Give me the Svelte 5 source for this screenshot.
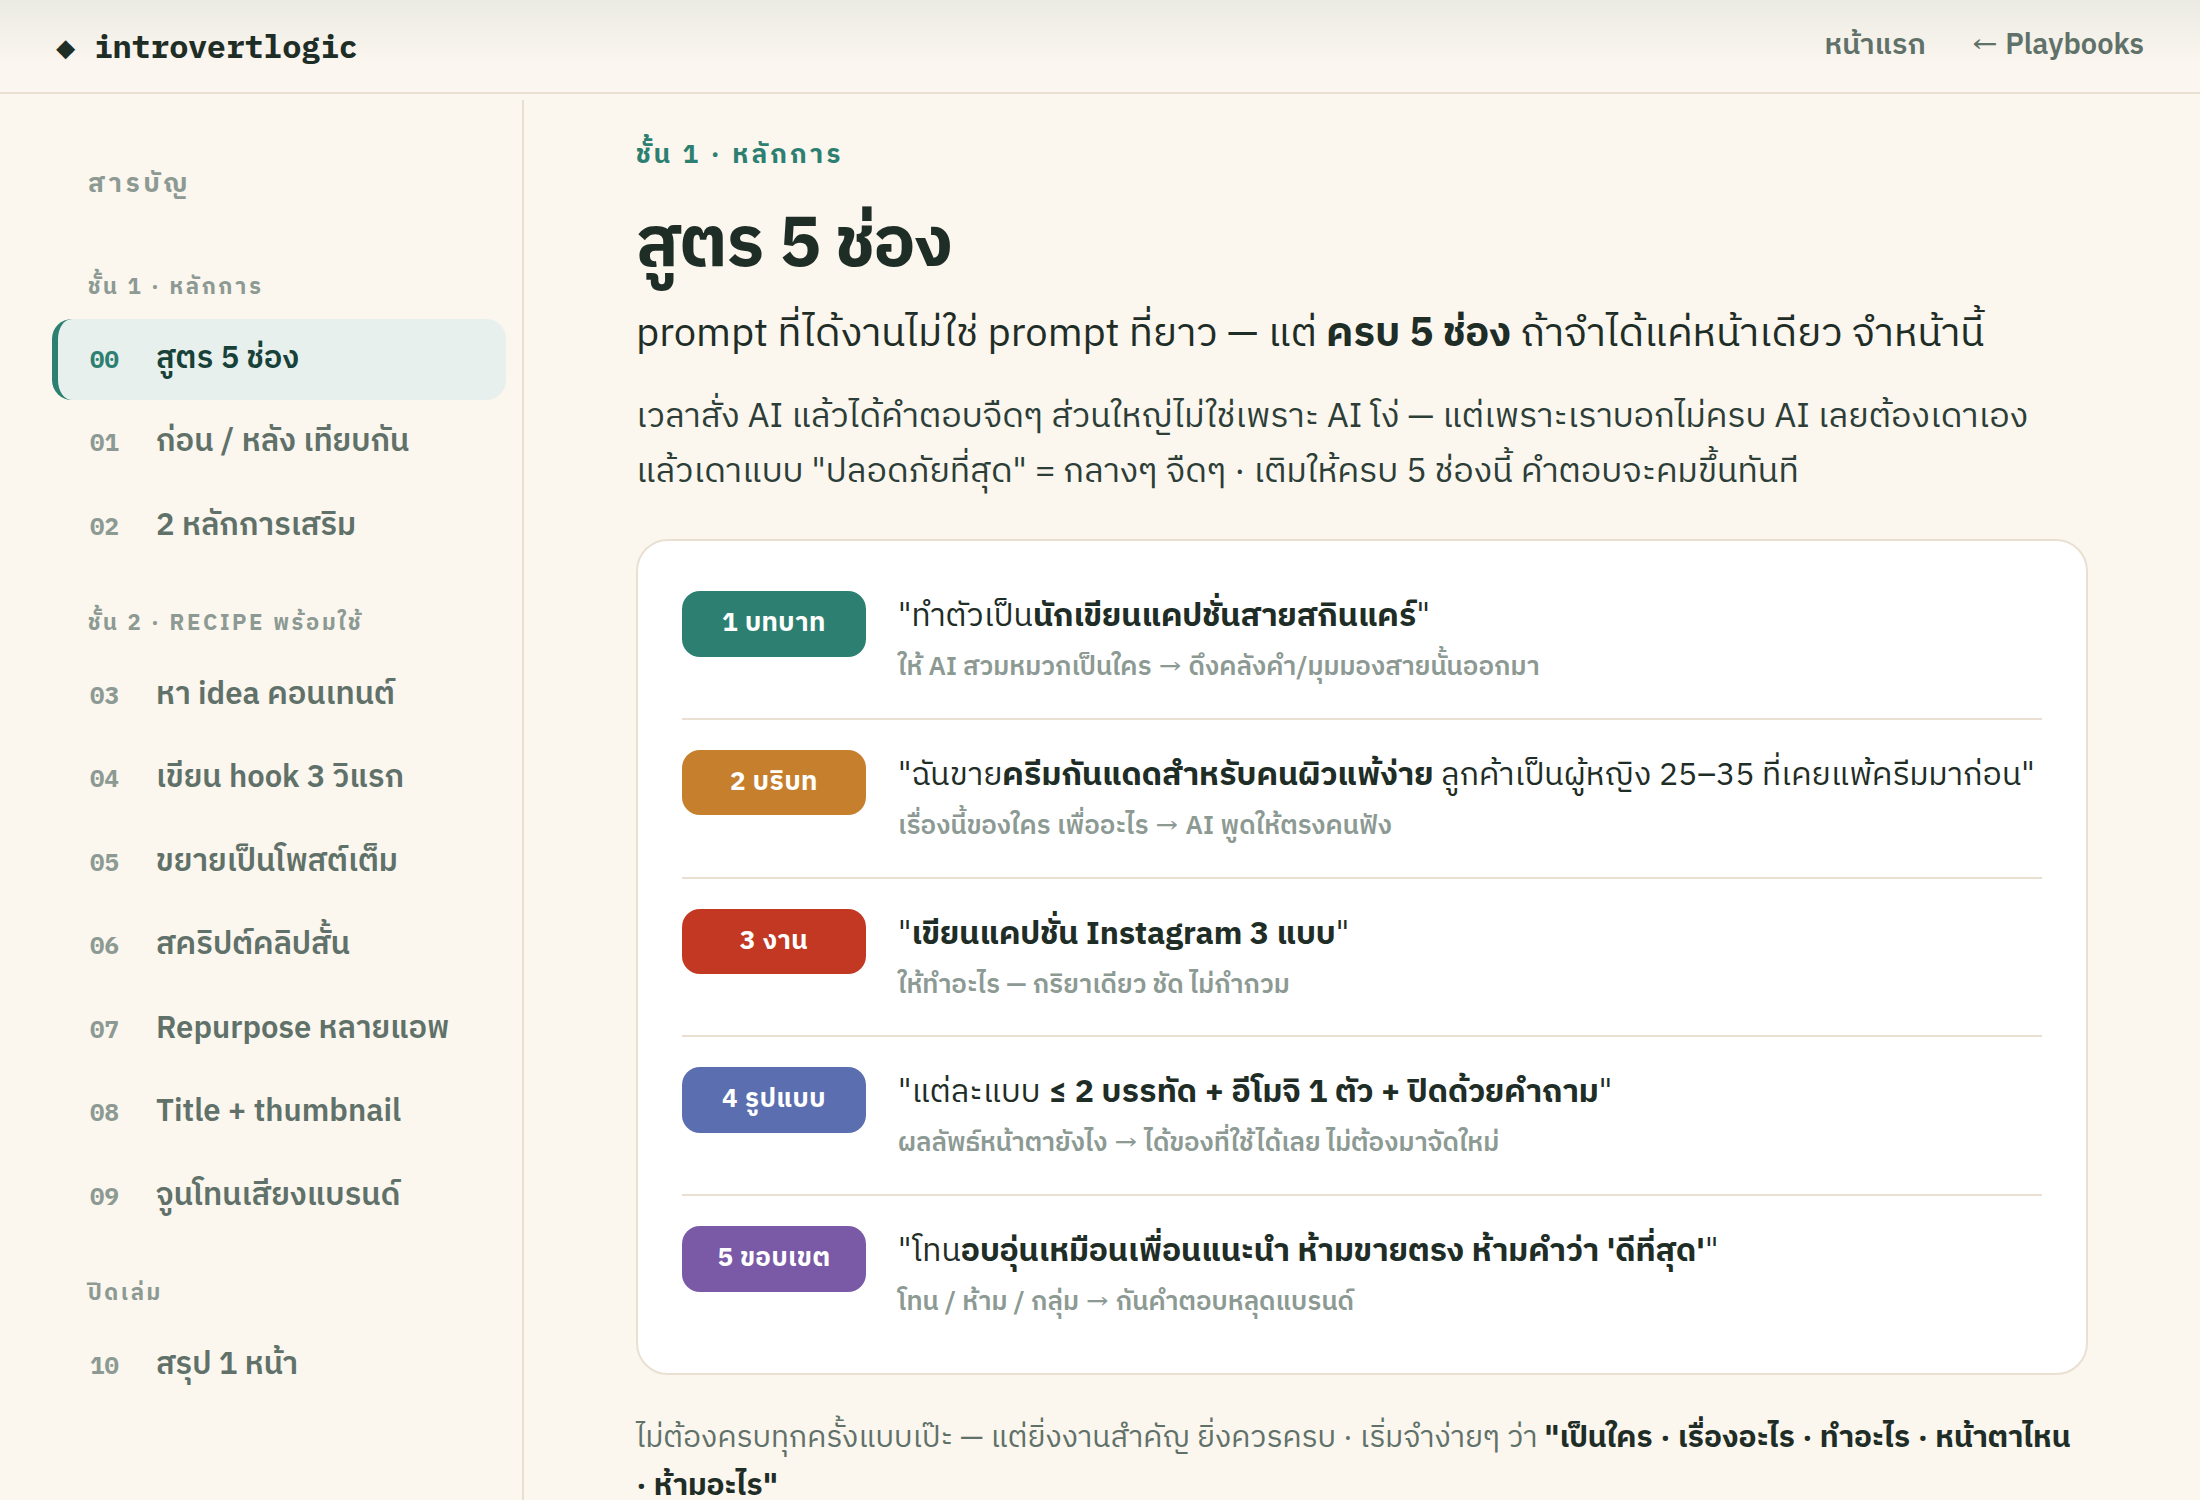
<script>
  const groups = [
    {
      title: "ชั้น 1 · หลักการ",
      items: [
        { num: "00", label: "สูตร 5 ช่อง", active: true },
        { num: "01", label: "ก่อน / หลัง เทียบกัน" },
        { num: "02", label: "2 หลักการเสริม" },
      ],
    },
    {
      title: "ชั้น 2 · RECIPE พร้อมใช้",
      items: [
        { num: "03", label: "หา idea คอนเทนต์" },
        { num: "04", label: "เขียน hook 3 วิแรก" },
        { num: "05", label: "ขยายเป็นโพสต์เต็ม" },
        { num: "06", label: "สคริปต์คลิปสั้น" },
        { num: "07", label: "Repurpose หลายแอพ" },
        { num: "08", label: "Title + thumbnail" },
        { num: "09", label: "จูนโทนเสียงแบรนด์" },
      ],
    },
    {
      title: "ปิดเล่ม",
      items: [{ num: "10", label: "สรุป 1 หน้า" }],
    },
  ]

  const slots = [
    {
      badge: "1 บทบาท",
      tone: "green",
      before: '"ทำตัวเป็น',
      strong: "นักเขียนแคปชั่นสายสกินแคร์",
      after: '"',
      note: ["ให้ AI สวมหมวกเป็นใคร", "ดึงคลังคำ/มุมมองสายนั้นออกมา"],
    },
    {
      badge: "2 บริบท",
      tone: "amber",
      before: '"ฉันขาย',
      strong: "ครีมกันแดดสำหรับคนผิวแพ้ง่าย",
      after: ' ลูกค้าเป็นผู้หญิง 25–35 ที่เคยแพ้ครีมมาก่อน"',
      note: ["เรื่องนี้ของใคร เพื่ออะไร", "AI พูดให้ตรงคนฟัง"],
    },
    {
      badge: "3 งาน",
      tone: "red",
      before: '"',
      strong: "เขียนแคปชั่น Instagram 3 แบบ",
      after: '"',
      note: ["ให้ทำอะไร — กริยาเดียว ชัด ไม่กำกวม"],
    },
    {
      badge: "4 รูปแบบ",
      tone: "blue",
      before: '"แต่ละแบบ ',
      strong: "≤ 2 บรรทัด + อีโมจิ 1 ตัว + ปิดด้วยคำถาม",
      after: '"',
      note: ["ผลลัพธ์หน้าตายังไง", "ได้ของที่ใช้ได้เลย ไม่ต้องมาจัดใหม่"],
    },
    {
      badge: "5 ขอบเขต",
      tone: "purple",
      before: '"โทน',
      strong: "อบอุ่นเหมือนเพื่อนแนะนำ ห้ามขายตรง ห้ามคำว่า 'ดีที่สุด'",
      after: '"',
      note: ["โทน / ห้าม / กลุ่ม", "กันคำตอบหลุดแบรนด์"],
    },
  ]
</script>

<div class="page" lang="th">
  <header class="topbar">
    <a class="brand" href="#home">◆ introvertlogic</a>
    <nav class="links">
      <a href="#home">หน้าแรก</a>
      <a href="#playbooks"><span class="arrow">←</span> Playbooks</a>
    </nav>
  </header>

  <div class="layout">
    <aside class="sidebar">
      <div class="toc-title">สารบัญ</div>
      {#each groups as group (group.title)}
        <div class="group">
          <div class="group-title">{group.title}</div>
          {#each group.items as item (item.num)}
            <a class="item" class:active={item.active} href="#s{item.num}">
              <span class="num">{item.num}</span>
              <span class="label">{item.label}</span>
            </a>
          {/each}
        </div>
      {/each}
    </aside>

    <main class="content">
      <div class="eyebrow">ชั้น 1 · หลักการ</div>
      <h1>สูตร 5 ช่อง</h1>
      <p class="lead">
        prompt ที่ได้งานไม่ใช่ prompt ที่ยาว — แต่ <strong>ครบ 5 ช่อง</strong> ถ้าจำได้แค่หน้าเดียว จำหน้านี้
      </p>
      <p class="body">
        เวลาสั่ง AI แล้วได้คำตอบจืดๆ ส่วนใหญ่ไม่ใช่เพราะ AI โง่ — แต่เพราะเราบอกไม่ครบ AI เลยต้องเดาเอง<br />
        แล้วเดาแบบ "ปลอดภัยที่สุด" = กลางๆ จืดๆ · เติมให้ครบ 5 ช่องนี้ คำตอบจะคมขึ้นทันที
      </p>

      <section class="card">
        {#each slots as slot (slot.badge)}
          <div class="slot">
            <span class="badge {slot.tone}">{slot.badge}</span>
            <div class="slot-text">
              <div class="quote">{slot.before}<strong>{slot.strong}</strong>{slot.after}</div>
              <div class="note">
                {slot.note[0]}
                {#if slot.note[1]}<span class="arrow">→</span> {slot.note[1]}{/if}
              </div>
            </div>
          </div>
        {/each}
      </section>

      <p class="closing">
        ไม่ต้องครบทุกครั้งแบบเป๊ะ — แต่ยิ่งงานสำคัญ ยิ่งควรครบ · เริ่มจำง่ายๆ ว่า
        <strong>"เป็นใคร · เรื่องอะไร · ทำอะไร · หน้าตาไหน<br />· ห้ามอะไร"</strong>
      </p>
    </main>
  </div>
</div>

<style>
  :global(body) {
    margin: 0;
    background: #fbf6ee;
  }

  .page {
    --ink: #1f2d27;
    --ink-soft: #5f7169;
    --muted: #8c9a93;
    --line: #e9e0d2;
    --green: #2d8071;
    height: 1500px;
    overflow: hidden;
    display: flex;
    flex-direction: column;
    background: #fbf6ee;
    color: var(--ink);
    font-family: "IBM Plex Sans Thai", "IBM Plex Sans", "Noto Sans", sans-serif;
    white-space: nowrap;
  }

  a {
    color: inherit;
    text-decoration: none;
  }

  strong {
    font-weight: 700;
  }

  .topbar {
    box-sizing: border-box;
    height: 94px;
    flex: none;
    display: flex;
    align-items: flex-start;
    justify-content: space-between;
    padding: 0 56px;
    border-bottom: 2px solid var(--line);
    background: linear-gradient(#ebebe3, #fbf6ef 64px);
  }

  .brand {
    font: 700 32px/92px "IBM Plex Mono", "Liberation Mono", monospace;
    letter-spacing: -0.35px;
  }

  .links {
    display: flex;
    gap: 45px;
    color: var(--ink-soft);
    font-size: 29px;
    font-weight: 600;
    line-height: 91px;
  }

  .arrow {
    display: inline-flex;
    justify-content: center;
    width: 0.74em;
    font-family: "Sarabun", "Liberation Sans", sans-serif;
    font-size: 1.28em;
    font-weight: 700;
    line-height: 0;
  }

  .layout {
    flex: 1;
    min-height: 0;
    display: flex;
    padding-top: 6px;
  }

  .sidebar {
    box-sizing: border-box;
    width: 524px;
    flex: none;
    padding: 60px 16px 0 52px;
    border-right: 2px solid var(--line);
  }

  .toc-title {
    height: 71px;
    padding-left: 36px;
    color: var(--muted);
    font-size: 26px;
    font-weight: 700;
    line-height: 50px;
    letter-spacing: 0.14em;
  }

  .group {
    display: flex;
    flex-direction: column;
    gap: 2.5px;
    padding-top: 18.5px;
  }

  .group-title {
    height: 67px;
    padding-left: 36px;
    color: var(--muted);
    font-size: 22px;
    font-weight: 700;
    line-height: 76px;
    letter-spacing: 0.12em;
  }

  .item {
    box-sizing: border-box;
    height: 81px;
    display: flex;
    align-items: center;
    padding: 0 0 2px 32px;
    border-left: 6px solid transparent;
    border-radius: 20px;
    color: var(--ink-soft);
    font-size: 31px;
    font-weight: 600;
  }

  .num {
    width: 66px;
    color: var(--muted);
    font-family: "IBM Plex Mono", "Liberation Mono", monospace;
    font-size: 24px;
    font-weight: 700;
  }

  .item.active {
    border-left-color: var(--green);
    background: #e7f0ec;
    color: #174139;
  }

  .active .num {
    color: var(--green);
  }

  .content {
    width: 1452px;
    padding-left: 112px;
  }

  .eyebrow {
    margin-top: 32px;
    color: var(--green);
    font-size: 26px;
    font-weight: 700;
    line-height: 48px;
    letter-spacing: 0.12em;
  }

  h1 {
    margin: 18px 0 0;
    font-size: 70px;
    font-weight: 700;
    line-height: 96px;
    letter-spacing: -0.015em;
  }

  p {
    margin: 0;
  }

  .lead {
    margin-top: 10px;
    font-size: 40px;
    line-height: 60px;
  }

  .body {
    margin-top: 26px;
    color: #2c3e37;
    font-size: 34px;
    line-height: 55px;
  }

  .card {
    box-sizing: border-box;
    height: 836px;
    margin-top: 39px;
    padding: 20px 44px 0;
    border: 2px solid var(--line);
    border-radius: 32px;
    background: #fff;
  }

  .slot {
    box-sizing: border-box;
    height: 158.8px;
    display: flex;
    gap: 32px;
    padding-top: 30px;
    border-bottom: 2px solid var(--line);
  }

  .slot:last-child {
    border-bottom: 0;
  }

  .badge {
    width: 184px;
    height: 65.6px;
    border-radius: 18px;
    color: #fff;
    font-size: 26px;
    font-weight: 700;
    line-height: 65px;
    letter-spacing: 0.02em;
    text-align: center;
  }

  .green {
    background: #2d8071;
  }

  .amber {
    background: #c67f2d;
  }

  .red {
    background: #c23822;
  }

  .blue {
    background: #5b6eb0;
  }

  .purple {
    background: #7a5aa6;
  }

  .quote {
    font-size: 32px;
    line-height: 52px;
  }

  .note {
    margin-top: 1px;
    color: var(--muted);
    font-size: 26px;
    font-weight: 600;
    line-height: 47px;
  }

  .closing {
    margin-top: 40px;
    color: var(--ink-soft);
    font-size: 30px;
    line-height: 48px;
  }

  .closing strong {
    color: var(--ink);
  }
</style>
